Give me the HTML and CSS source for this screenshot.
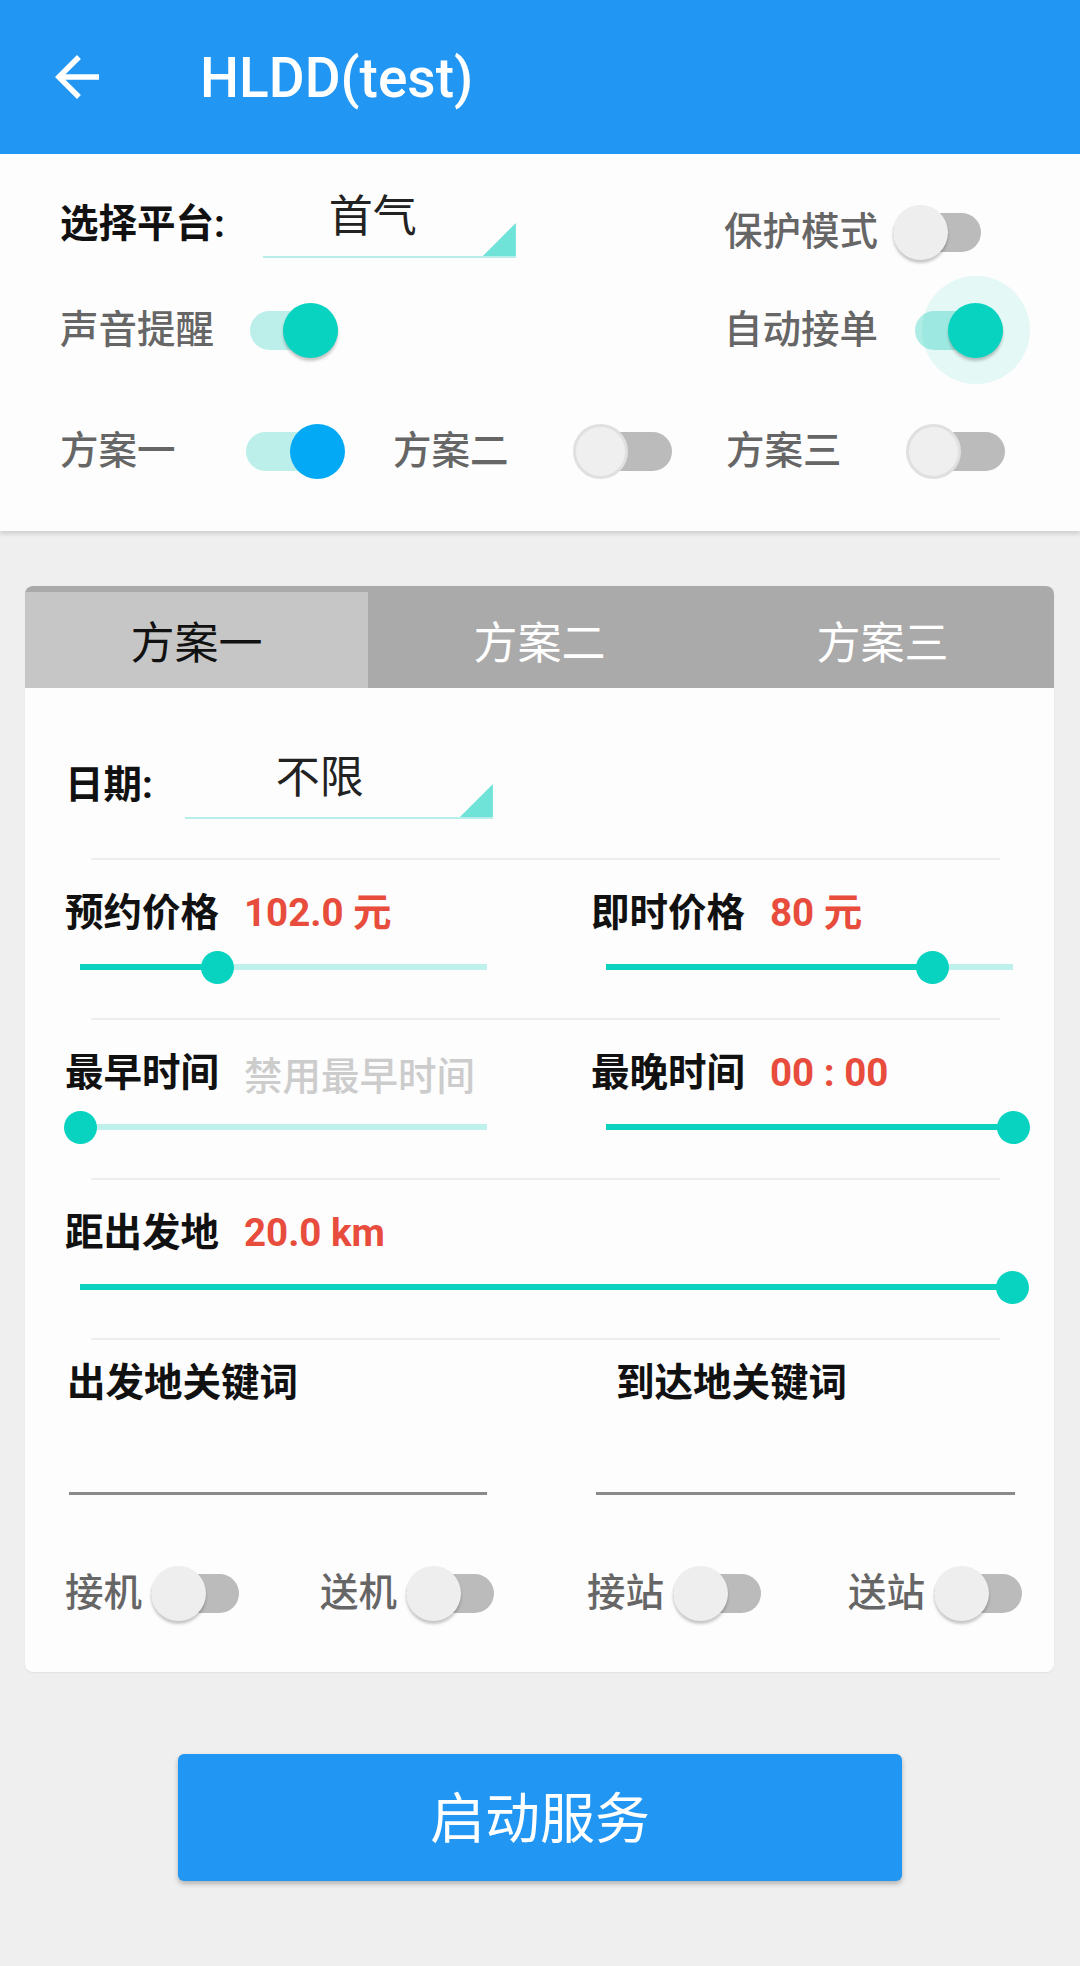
FILE: index.html
```html
<!DOCTYPE html>
<html lang="zh-CN">
<head>
<meta charset="utf-8">
<title>HLDD(test)</title>
<link rel="stylesheet" href="styles.css">
</head>
<body>
<div class="screen">
  <header class="appbar">
    <svg class="back" viewBox="0 0 24 24" width="66" height="66" aria-hidden="true"><path fill="#ffffff" d="M20 11H7.83l5.59-5.59L12 4l-8 8 8 8 1.41-1.41L7.83 13H20v-2z"/></svg>
    <h1 class="title">HLDD(test)</h1>
  </header>

  <section class="panel">
    <div class="prow prow-1">
      <span class="lbl-strong lbl-platform">选择平台:</span>
      <div class="dropdown dropdown-platform"><span class="dd-text">首气</span></div>
      <div class="grp grp-protect">
        <span class="lbl-muted">保护模式</span>
        <span class="sw"><span class="sw-track"></span><span class="sw-thumb"></span></span>
      </div>
    </div>
    <div class="prow prow-2">
      <span class="lbl-muted">声音提醒</span>
      <span class="sw sw-on sw-sound"><span class="sw-track"></span><span class="sw-thumb"></span></span>
      <div class="grp grp-auto">
        <span class="lbl-muted">自动接单</span>
        <span class="sw sw-on sw-auto"><span class="sw-track"></span><span class="sw-halo"></span><span class="sw-thumb"></span></span>
      </div>
    </div>
    <div class="prow prow-3">
      <div class="plan-col">
        <span class="lbl-muted">方案一</span>
        <span class="sw sw-wide sw-on sw-blue"><span class="sw-track"></span><span class="sw-thumb"></span></span>
      </div>
      <div class="plan-col">
        <span class="lbl-muted">方案二</span>
        <span class="sw sw-wide sw-flat"><span class="sw-track"></span><span class="sw-thumb"></span></span>
      </div>
      <div class="plan-col">
        <span class="lbl-muted">方案三</span>
        <span class="sw sw-wide sw-flat"><span class="sw-track"></span><span class="sw-thumb"></span></span>
      </div>
    </div>
  </section>

  <section class="card">
    <div class="tabs">
      <div class="tab tab-active">方案一</div>
      <div class="tab">方案二</div>
      <div class="tab">方案三</div>
    </div>

    <div class="date-row">
      <span class="lbl-strong">日期:</span>
      <div class="dropdown dropdown-date"><span class="dd-text">不限</span></div>
    </div>
    <div class="divider divider-first"></div>

    <div class="sect">
      <div class="field">
        <div class="field-head"><span class="lbl-strong">预约价格</span><span class="val">102.0 元</span></div>
        <div class="slider"><div class="track"><div class="fill" style="width:33.9%"></div></div><span class="knob" style="left:33.9%"></span></div>
      </div>
      <div class="field">
        <div class="field-head"><span class="lbl-strong">即时价格</span><span class="val">80 元</span></div>
        <div class="slider"><div class="track"><div class="fill" style="width:80.1%"></div></div><span class="knob" style="left:80.1%"></span></div>
      </div>
    </div>
    <div class="divider"></div>

    <div class="sect">
      <div class="field">
        <div class="field-head"><span class="lbl-strong">最早时间</span><span class="val val-muted">禁用最早时间</span></div>
        <div class="slider"><div class="track"><div class="fill" style="width:0%"></div></div><span class="knob" style="left:0%"></span></div>
      </div>
      <div class="field">
        <div class="field-head"><span class="lbl-strong">最晚时间</span><span class="val">00 : 00</span></div>
        <div class="slider"><div class="track"><div class="fill" style="width:100%"></div></div><span class="knob" style="left:100%"></span></div>
      </div>
    </div>
    <div class="divider"></div>

    <div class="sect sect-single">
      <div class="field">
        <div class="field-head"><span class="lbl-strong">距出发地</span><span class="val">20.0 km</span></div>
        <div class="slider slider-full"><div class="track"><div class="fill" style="width:100%"></div></div><span class="knob" style="left:100%"></span></div>
      </div>
    </div>
    <div class="divider"></div>

    <div class="kw">
      <div class="kw-col">
        <div class="lbl-strong kw-label kw-label-left">出发地关键词</div>
        <div class="kw-input"></div>
      </div>
      <div class="kw-col">
        <div class="lbl-strong kw-label kw-label-right">到达地关键词</div>
        <div class="kw-input"></div>
      </div>
    </div>

    <div class="trip-row">
      <div class="trip"><span class="lbl-muted">接机</span><span class="sw"><span class="sw-track"></span><span class="sw-thumb"></span></span></div>
      <div class="trip"><span class="lbl-muted">送机</span><span class="sw"><span class="sw-track"></span><span class="sw-thumb"></span></span></div>
      <div class="trip"><span class="lbl-muted">接站</span><span class="sw"><span class="sw-track"></span><span class="sw-thumb"></span></span></div>
      <div class="trip"><span class="lbl-muted">送站</span><span class="sw"><span class="sw-track"></span><span class="sw-thumb"></span></span></div>
    </div>
  </section>

  <button class="start-btn" type="button">启动服务</button>
</div>
</body>
</html>
```

FILE: styles.css
```css
* { box-sizing: border-box; }

html, body {
  margin: 0;
  padding: 0;
}

body {
  background: #efefef;
  font-family: Roboto, "Noto Sans CJK SC", "Noto Sans", sans-serif;
  color: #111;
}

.screen {
  width: 1080px;
  height: 1966px;
  overflow: hidden;
  background: #efefef;
}

/* ---------- app bar ---------- */
.appbar {
  height: 154px;
  background: #2196f3;
  display: flex;
  align-items: center;
  padding-left: 44px;
}

.back { display: block; flex: none; }

.title {
  margin: 0 0 0 90px;
  font-family: Roboto, "Noto Sans CJK SC", sans-serif;
  font-weight: 500;
  font-size: 55px;
  line-height: 64px;
  color: #ffffff;
  position: relative;
  top: 1px;
}

/* ---------- labels ---------- */
.lbl-strong {
  font-size: 38.5px;
  font-weight: 700;
  color: #111;
  line-height: 50px;
  white-space: nowrap;
}

.lbl-muted {
  font-size: 38.5px;
  font-weight: 500;
  color: #666666;
  line-height: 50px;
  white-space: nowrap;
}

/* ---------- top panel ---------- */
.panel {
  height: 377px;
  background: #fdfdfd;
  padding-top: 32px;
  box-shadow: 0 3px 4px rgba(0, 0, 0, 0.13);
  position: relative;
}

.prow {
  display: flex;
  align-items: center;
  padding-left: 60px;
}

.prow-1 { height: 92px; padding-right: 99px; }
.prow-2 { height: 104px; padding-right: 77px; }
.prow-3 {
  height: 138px;
  display: grid;
  grid-template-columns: 333px 333px 333px;
}

.lbl-platform {
  align-self: flex-start;
  margin-top: 11px;
  line-height: 54px;
}

.grp {
  margin-left: auto;
  display: flex;
  align-items: center;
}

.grp-protect .sw { margin-left: 15px; }
.grp-auto .sw { margin-left: 37px; }
.sw-sound { margin-left: 36px; }

.plan-col {
  display: flex;
  align-items: center;
}

.plan-col .sw { margin-left: 64px; }

/* ---------- dropdown ---------- */
.dropdown {
  position: relative;
  height: 68px;
  border-bottom: 2px solid #b9ede9;
}

.dropdown::after {
  content: "";
  position: absolute;
  right: 0;
  bottom: 0;
  width: 33px;
  height: 33px;
  background: #6fe3d7;
  clip-path: polygon(100% 0, 100% 100%, 0 100%);
}

.dd-text {
  display: block;
  font-size: 44px;
  line-height: 54px;
  color: #222;
  font-weight: 400;
}

.dropdown-platform {
  align-self: flex-start;
  margin-top: 4px;
  margin-left: 38px;
  width: 253px;
  padding-left: 66px;
}

.dropdown-date {
  margin-left: 32px;
  width: 308px;
  padding-left: 91px;
}

/* ---------- switches ---------- */
.sw {
  position: relative;
  display: inline-block;
  flex: none;
  width: 88px;
  height: 55px;
}

.sw-track {
  display: block;
  height: 39px;
  margin: 8px 0;
  border-radius: 20px;
  background: #bbbbbb;
}

.sw-thumb {
  position: absolute;
  top: 0;
  left: 0;
  width: 55px;
  height: 55px;
  border-radius: 50%;
  background: #eeeeee;
  box-shadow: 0 3px 3px rgba(0, 0, 0, 0.22);
}

.sw-on .sw-track { background: #bcefea; }
.sw-on .sw-thumb {
  left: auto;
  right: 0;
  background: #07d3c0;
}

.sw-wide { width: 105px; }
.sw-wide .sw-track { margin: 8px 6px; }

.sw-flat .sw-thumb {
  box-shadow: none;
  background: #efefef;
  border: 3px solid #e0e0e0;
}

.sw-blue .sw-thumb {
  background: #03a9f4;
  box-shadow: none;
}

.sw-auto .sw-track { background: #aeece6; }

.sw-halo {
  position: absolute;
  width: 108px;
  height: 108px;
  border-radius: 50%;
  background: rgba(10, 210, 190, 0.1);
  top: -26.5px;
  right: -26.5px;
}

/* ---------- card ---------- */
.card {
  margin: 55px 26px 0 25px;
  background: #fdfdfd;
  border-radius: 8px;
  overflow: hidden;
  box-shadow: 0 1px 2px rgba(0, 0, 0, 0.06);
  padding-bottom: 49px;
}

.tabs {
  display: flex;
  background: #aaaaaa;
  padding-top: 6px;
}

.tab {
  flex: 1;
  height: 96px;
  display: flex;
  align-items: center;
  justify-content: center;
  font-size: 44px;
  color: #ffffff;
  font-weight: 400;
}

.tab-active {
  background: #c6c6c6;
  color: #111111;
}

.date-row {
  display: flex;
  align-items: center;
  height: 68px;
  margin-top: 63px;
  padding-left: 40px;
}

.divider {
  height: 2px;
  background: #eeeeee;
  margin-left: 66px;
  width: 909px;
}

.divider-first { margin-top: 39px; }

.sect {
  display: grid;
  grid-template-columns: 526px 1fr;
  padding: 28px 0 34px 40px;
}

.sect-single { grid-template-columns: 1fr; }

.field-head {
  display: flex;
  align-items: center;
  gap: 25px;
  height: 50px;
}

.val {
  font-family: Roboto, "Noto Sans CJK SC", sans-serif;
  font-weight: 700;
  font-size: 38.5px;
  color: #e74c3c;
  line-height: 50px;
  white-space: nowrap;
}

.val-muted {
  font-family: "Noto Sans CJK SC", sans-serif;
  font-weight: 500;
  color: #cccccc;
}

/* ---------- slider ---------- */
.slider {
  position: relative;
  display: flex;
  align-items: center;
  width: 407px;
  height: 34px;
  margin: 12px 0 0 15px;
}

.slider-full { width: 932px; }

.track {
  flex: 1;
  height: 6px;
  background: #bef1ec;
}

.fill {
  height: 100%;
  background: #0ad2bf;
}

.knob {
  position: absolute;
  top: 0.5px;
  width: 33px;
  height: 33px;
  margin-left: -16.5px;
  border-radius: 50%;
  background: #07d3c0;
}

/* ---------- keywords ---------- */
.kw {
  display: grid;
  grid-template-columns: 418px 419px;
  column-gap: 109px;
  padding: 18px 0 0 44px;
}

.kw-label { display: block; }
.kw-label-left { margin-left: -2px; }
.kw-label-right { padding-left: 20px; }

.kw-input {
  height: 87px;
  border-bottom: 3px solid #8a8a8a;
}

/* ---------- trip switches ---------- */
.trip-row {
  display: grid;
  grid-template-columns: 255px 267px 261px auto;
  align-items: center;
  height: 60px;
  margin-top: 68px;
  padding-left: 40px;
}

.trip {
  display: flex;
  align-items: center;
}

.trip .sw { margin-left: 9px; }

/* ---------- start button ---------- */
.start-btn {
  display: block;
  margin: 82px auto 0;
  width: 724px;
  height: 127px;
  border: none;
  border-radius: 6px;
  background: #2196f3;
  color: #ffffff;
  font-family: "Noto Sans CJK SC", sans-serif;
  font-size: 55px;
  font-weight: 400;
  line-height: 1;
  padding: 0 0 6px;
  box-shadow: 0 3px 5px rgba(0, 0, 0, 0.25);
}
```
